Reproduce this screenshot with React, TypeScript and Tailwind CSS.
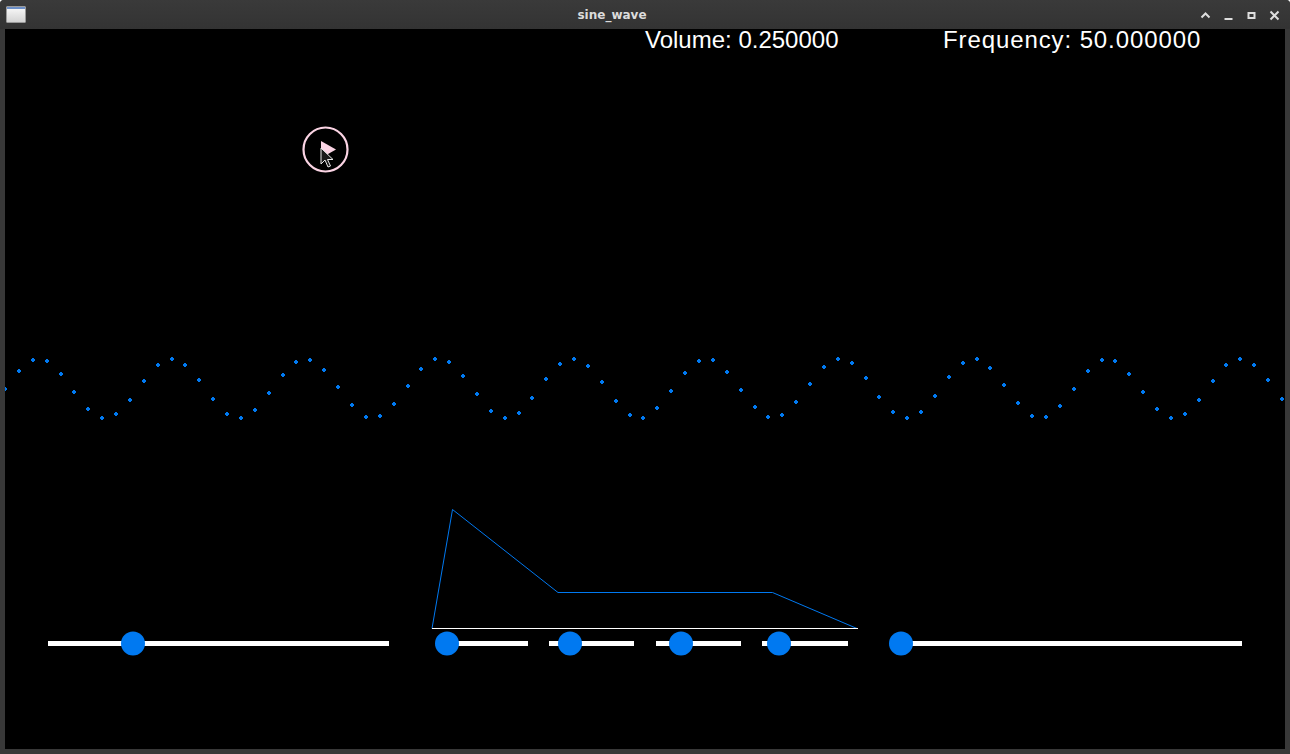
const BLUE = "#0079f1";

// samples of the wave, as the program plots them
const dots = Array.from({ length: 93 }, (_, i) => {
  const x = i * 13.88;
  const y = 359.5 - 29.5 * Math.sin((2 * Math.PI * x) / 133.6);
  return { x: Math.round(x), y: Math.round(y) };
});

const sliders = [
  { x: 43, w: 341, knob: 128 },
  { x: 438, w: 85, knob: 442 },
  { x: 544, w: 85, knob: 565 },
  { x: 651, w: 85, knob: 676 },
  { x: 757, w: 86, knob: 774 },
  { x: 896, w: 341, knob: 896 },
];

function TitleButtons() {
  return (
    <div className="flex h-full items-center pr-[4px] text-[#dedede]">
      <svg width="23" height="29" viewBox="0 0 23 29">
        <path d="M7.5 17.5 L11.5 13.5 L15.5 17.5" fill="none" stroke="currentColor" strokeWidth="2" />
      </svg>
      <svg width="23" height="29" viewBox="0 0 23 29">
        <rect x="7.5" y="18" width="8" height="2" fill="currentColor" />
      </svg>
      <svg width="23" height="29" viewBox="0 0 23 29">
        <rect x="8.5" y="13" width="6" height="5" fill="none" stroke="currentColor" strokeWidth="2" />
      </svg>
      <svg width="23" height="29" viewBox="0 0 23 29">
        <path d="M7.5 11.5 L15.5 19.5 M15.5 11.5 L7.5 19.5" stroke="currentColor" strokeWidth="2" />
      </svg>
    </div>
  );
}

function WindowIcon() {
  return (
    <div className="ml-[6px] flex h-[17px] w-[20px] flex-col overflow-hidden rounded-[1px] border border-[#9a9a9a] bg-gradient-to-b from-[#fafafa] to-[#d4d4d4]">
      <div className="h-[2px] bg-[#6c8fc8]" />
    </div>
  );
}

export default function App() {
  return (
    <div className="flex h-[754px] w-[1290px] flex-col rounded-t-[4px] bg-[#383838]">
      {/* title bar */}
      <div className="flex h-[29px] items-center rounded-t-[4px] bg-gradient-to-b from-[#3a3a3a] to-[#333333]">
        <div className="flex w-[30px] items-center">
          <WindowIcon />
        </div>
        <div className="flex-1 text-center font-['DejaVu_Sans',sans-serif] text-[12px] font-bold text-[#dcdcdc]">
          sine_wave
        </div>
        <TitleButtons />
      </div>

      {/* raylib canvas */}
      <div className="px-[5px] pb-[5px]">
        <div className="relative h-[720px] w-[1280px] bg-black">
          <div className="absolute left-[640px] top-0 font-['Liberation_Sans',sans-serif] text-[24px] leading-[22px] text-white">
            Volume: 0.250000
          </div>
          <div className="absolute left-[938px] top-0 font-['Liberation_Sans',sans-serif] text-[24px] leading-[22px] tracking-[0.9px] text-white">
            Frequency: 50.000000
          </div>

          <svg width="1280" height="720" viewBox="0 0 1280 720" className="block">
            {/* play button */}
            <circle cx="320.5" cy="120.5" r="22" fill="none" stroke="#fbd4e4" strokeWidth="2.2" />
            <path d="M316 112 L331 120.5 L316 129 Z" fill="#fbd4e4" />

            {/* wave */}
            <g fill={BLUE} shapeRendering="crispEdges">
              {dots.map((d, i) => (
                <g key={i}>
                  <rect x={d.x - 2} y={d.y - 1} width="4" height="2" />
                  <rect x={d.x - 1} y={d.y - 2} width="2" height="4" />
                </g>
              ))}
            </g>

            {/* envelope */}
            <path
              d="M427 599.5 L447.5 480.5 L553 563.5 L767.5 563.5 L852 599.5"
              fill="none"
              stroke={BLUE}
              strokeWidth="1"
            />
            <line x1="427" y1="599.5" x2="853" y2="599.5" stroke="#ffffff" strokeWidth="1" />

            {/* sliders */}
            {sliders.map((s, i) => (
              <g key={i}>
                <rect x={s.x} y="612" width={s.w} height="5" fill="#ffffff" />
                <circle cx={s.knob} cy="614.5" r="12" fill={BLUE} />
              </g>
            ))}

            {/* mouse pointer */}
            <path
              d="M316 119 L316 135 L320 131 L323 138 L325.5 137 L322.5 130.5 L328 130.5 Z"
              fill="#1a1a1a"
              stroke="#e8e8e8"
              strokeWidth="1"
              strokeLinejoin="round"
            />
          </svg>
        </div>
      </div>
    </div>
  );
}
